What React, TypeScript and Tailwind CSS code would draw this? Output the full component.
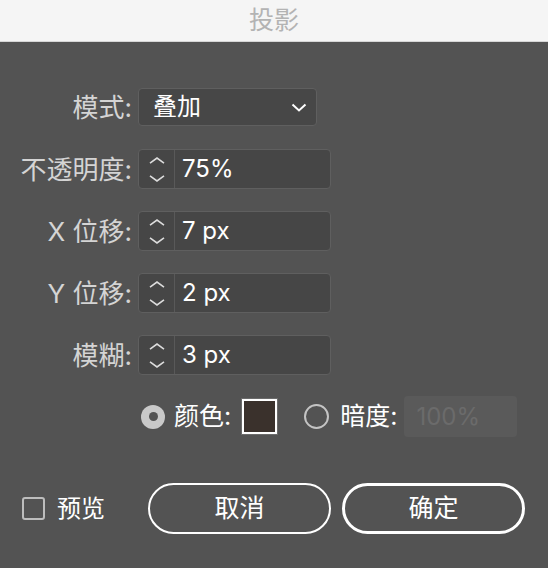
const font = "font-['Inter','Noto_Sans_CJK_SC',sans-serif]";

const Spinner = () => (
  <div className="flex h-full w-[36px] flex-col items-center justify-center gap-[11px] border-r border-[#595959]">
    <svg width="16" height="7" viewBox="0 0 16 7" fill="none">
      <path d="M1 6.2 L8 1 L15 6.2" stroke="#dcdcdc" strokeWidth="1.6" />
    </svg>
    <svg width="16" height="7" viewBox="0 0 16 7" fill="none">
      <path d="M1 0.8 L8 6 L15 0.8" stroke="#dcdcdc" strokeWidth="1.6" />
    </svg>
  </div>
);

const NumberField = ({ value }: { value: string }) => (
  <div className="flex h-[40px] w-[193px] items-center rounded-[4px] border border-[#5f5f5f] bg-[#464646]">
    <Spinner />
    <span className="pl-[7px] text-[24px] leading-none text-white">{value}</span>
  </div>
);

const Label = ({ text }: { text: string }) => (
  <div className="flex h-[40px] items-center justify-end text-[26px] text-[#d4d4d4]">{text}</div>
);

export default function App() {
  const rows = [
    { label: "不透明度:", value: "75%" },
    { label: "X 位移:", value: "7 px" },
    { label: "Y 位移:", value: "2 px" },
    { label: "模糊:", value: "3 px" },
  ];

  return (
    <div className={`${font} flex h-[568px] w-[548px] flex-col bg-[#535353]`}>
      <div className="flex h-[42px] items-center justify-center border-b border-[#d6d6d6] bg-[#f5f5f5] text-[25px] text-[#b3b3b3]">
        投影
      </div>

      <div className="mt-[45px] grid grid-cols-[132px_auto] gap-x-[6px] gap-y-[22px]">
        <Label text="模式:" />
        <div className="flex items-center">
          <div className="flex h-[38px] w-[179px] items-center justify-between rounded-[4px] border border-[#5f5f5f] bg-[#474747] pl-[14px] pr-[9px]">
            <span className="text-[24px] leading-none text-white">叠加</span>
            <svg width="16" height="9" viewBox="0 0 16 9" fill="none">
              <path d="M1.5 1.5 L8 7.5 L14.5 1.5" stroke="#ffffff" strokeWidth="2" />
            </svg>
          </div>
        </div>
        {rows.map((r) => (
          <div key={r.label} className="contents">
            <Label text={r.label} />
            <div className="flex items-center">
              <NumberField value={r.value} />
            </div>
          </div>
        ))}
      </div>

      <div className="mt-[21px] flex h-[41px] items-center pl-[141px]">
        <div className="flex h-[24px] w-[24px] items-center justify-center rounded-full bg-[#c9c9c9]">
          <div className="h-[9px] w-[9px] rounded-full bg-[#535353]" />
        </div>
        <span className="ml-[9px] text-[25px] text-white">颜色:</span>
        <div className="ml-[10px] h-[37px] w-[37px] border border-[#6b6b6b]">
          <div className="h-full w-full border-[2px] border-white bg-[#3a312c]" />
        </div>
        <div className="ml-[26px] h-[25px] w-[25px] rounded-full border-[2px] border-[#c4c4c4]" />
        <span className="ml-[11px] text-[25px] text-white">暗度:</span>
        <div className="ml-[7px] flex h-[41px] w-[113px] items-center rounded-[4px] bg-[#5a5a5a] pl-[12px] text-[24px] text-[#6b6b6b]">
          100%
        </div>
      </div>

      <div className="mt-[46px] flex items-center pl-[22px]">
        <div className="h-[23px] w-[23px] rounded-[3px] border-[2px] border-[#bdbdbd]" />
        <span className="ml-[12px] text-[24px] text-white">预览</span>
        <button className="ml-[43px] flex h-[51px] w-[183px] items-center justify-center rounded-full border-[2px] border-white text-[25px] text-white">
          取消
        </button>
        <button className="ml-[11px] flex h-[51px] w-[183px] items-center justify-center rounded-full border-[3px] border-white text-[25px] text-white">
          确定
        </button>
      </div>
    </div>
  );
}
